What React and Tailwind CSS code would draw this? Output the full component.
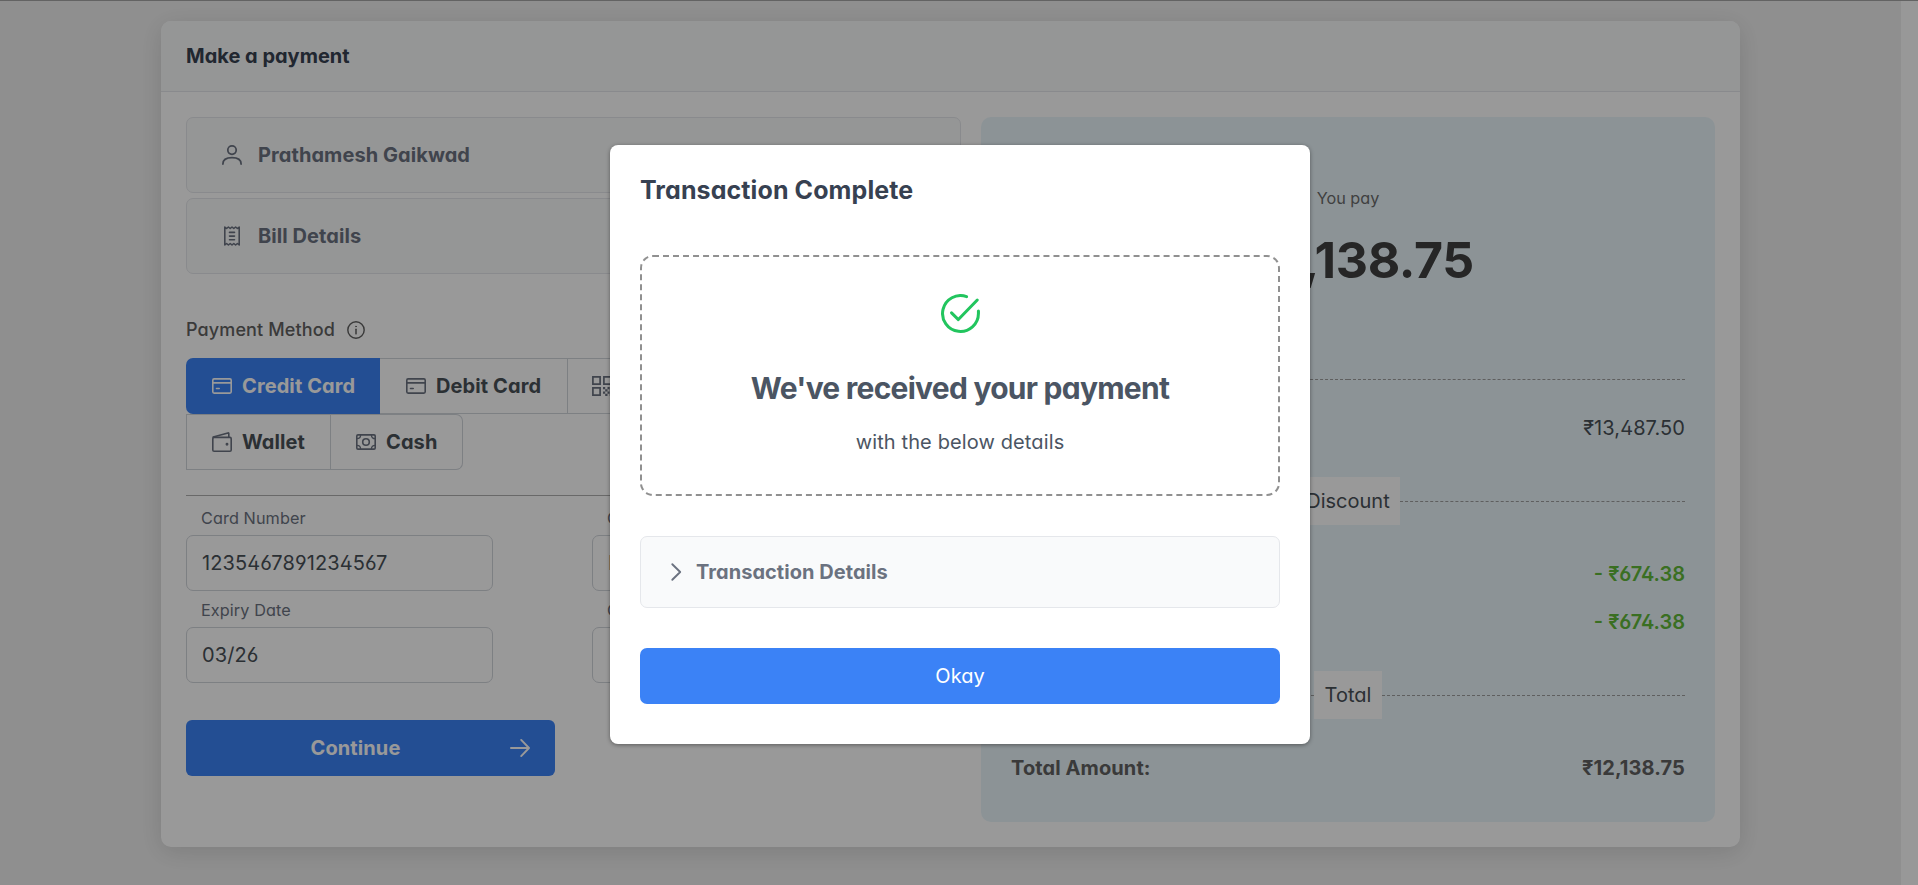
const FONT = "font-['Inter','Liberation_Sans',sans-serif] [font-feature-settings:'cv02','cv03','cv04','cv11']";

function Icon({ children, className = '', size = 20, sw = 1.6 }) {
  return (
    <svg
      width={size}
      height={size}
      viewBox="0 0 20 20"
      fill="none"
      stroke="currentColor"
      strokeWidth={sw}
      strokeLinecap="round"
      strokeLinejoin="round"
      className={'shrink-0 ' + className}
    >
      {children}
    </svg>
  );
}

const UserIcon = (p) => (
  <Icon {...p} sw={1.75}>
    <circle cx="10" cy="5.1" r="4.2" />
    <path d="M.9 19.1c0-4.6 3.5-6.400 9.100-6.400s9.100 1.800 9.100 6.400" />
  </Icon>
);
const ReceiptIcon = (p) => (
  <Icon {...p} sw={1.6}>
    <path d="M2.8 1v18l1.800-1.500 1.800 1.500 1.800-1.500L10 19l1.800-1.500 1.800 1.500 1.800-1.500L17.200 19V1l-1.800 1.500L13.600 1l-1.800 1.500L10 1 8.200 2.500 6.400 1 4.600 2.500z" />
    <path d="M7.500 6.400h5M7.500 10.100h5M7.500 13.800h5" />
  </Icon>
);
const InfoIcon = (p) => (
  <Icon {...p} sw={1.6}>
    <circle cx="10" cy="10" r="9.100" />
    <path d="M10 9.300v5" strokeWidth="1.700" />
    <circle cx="10" cy="6.100" r=".5" fill="currentColor" strokeWidth=".9" />
  </Icon>
);
const CardIcon = (p) => (
  <Icon {...p}>
    <rect x=".8" y="2.850" width="18.400" height="14.300" rx="1.300" />
    <path d="M.9 6.900h18.200M4.500 12.500h2.700" />
  </Icon>
);
const QrIcon = (p) => (
  <Icon {...p} sw={1.7}>
    <path strokeLinejoin="miter" d="M.9.9h7.200v7.200H.9zM11.900.9h7.200v7.200h-7.200zM.9 11.900h7.200v7.200H.9z" />
    <path
      fill="currentColor"
      stroke="none"
      d="M11 11h2.200v2.200H11zM15.500 11h2.200v2.200h-2.200zM13.200 13.200h2.300v2.300h-2.300zM17.700 13.200H20v2.300h-2.300zM11 15.500h2.200v2.200H11zM15.500 15.500h2.200v2.200h-2.200zM13.200 17.700h2.300V20h-2.300zM17.700 17.700H20V20h-2.300z"
    />
  </Icon>
);
const WalletIcon = (p) => (
  <Icon {...p} sw={1.6}>
    <rect x=".8" y="5.400" width="18.400" height="13.800" rx="1.300" />
    <path d="M1.200 5.100 15.900.9c.5-.15.900.1.900.6v3.700" />
    <circle cx="15" cy="12.200" r=".9" fill="currentColor" strokeWidth="1.100" />
  </Icon>
);
const MoneyIcon = (p) => (
  <Icon {...p} sw={1.6}>
    <rect x=".8" y="2.850" width="18.400" height="14.300" rx="1.200" />
    <circle cx="10" cy="10" r="3.300" />
    <path
      d="M.9 6.700c2.200 0 3.700-1.500 3.700-3.700M19.100 6.700c-2.200 0-3.700-1.500-3.700-3.700M.9 13.300c2.200 0 3.700 1.500 3.700 3.700M19.100 13.300c-2.200 0-3.700 1.500-3.700 3.700"
      strokeWidth="1.300"
    />
  </Icon>
);
const ArrowIcon = (p) => (
  <Icon {...p} sw={1.9}>
    <path d="M.95 10h18M11.200 1.900 19 10l-7.800 8.100" />
  </Icon>
);
const ChevronIcon = (p) => (
  <Icon {...p} sw={1.9}>
    <path d="M6.300 2.200 14.200 10l-7.900 7.800" />
  </Icon>
);
const CheckCircleIcon = (p) => (
  <Icon {...p} sw={1.55}>
    <path d="M19.200 8.700V10A9.200 9.200 0 1 1 13.100 1.350" />
    <path d="M5.400 9.700 8.900 13.100 18.600 3.100" />
  </Icon>
);

function Panel({ icon, label, className = '' }) {
  return (
    <div className={'flex h-[76px] items-center gap-4 rounded-[7px] border border-[#e5e7eb] bg-[#f9fafb] pl-[35px] text-[#6b7280] ' + className}>
      {icon}
      <span className="text-[20px] font-bold leading-none tracking-[0.07px]">{label}</span>
    </div>
  );
}

function Tab({ icon, label, className }) {
  return (
    <div className={'flex h-[56px] items-center gap-[10px] border-[#d1d5db] ' + className}>
      {icon}
      {label && <span className="text-[20px] font-bold leading-none tracking-[0.1px]">{label}</span>}
    </div>
  );
}

function Field({ label, value, className = '' }) {
  return (
    <div className={'w-[307px] ' + className}>
      <div className="flex h-[36px] items-center pl-[15px] pt-[3px] text-[16.250px] leading-none tracking-[0.08px] text-[#6b7280]">{label}</div>
      <div className="flex h-[56px] items-center rounded-[7px] border border-[#d1d5db] pl-[15px] text-[20px] leading-none tracking-[0.12px] text-[#495057]">
        {value}
      </div>
    </div>
  );
}

function Divider({ label, width, className }) {
  return (
    <div className={'flex h-[48px] items-center text-[#495057] ' + className}>
      <div className="flex-1 border-t border-dashed border-[#9e9e9e]" />
      {label && <div className={'flex h-[48px] items-center justify-center bg-white text-[20px] leading-none ' + width}>{label}</div>}
      <div className="flex-1 border-t border-dashed border-[#9e9e9e]" />
    </div>
  );
}

export default function App() {
  return (
    <div className={'relative flex h-[885px] w-[1918px] overflow-hidden bg-[#efefef] ' + FONT}>
      <div className="flex-1 border-t border-[#a6a6a6] pl-[161px] pt-[20px]">
        <div className="h-[826px] w-[1579px] rounded-[10px] bg-white shadow-[0_5px_25px_rgba(0,0,0,0.12)]">
          <div className="flex h-[71px] items-center rounded-t-[10px] border-b border-[#e5e7eb] bg-[#f9fafb] px-[25px] text-[20px] font-bold leading-none text-[#374151]">
            Make a payment
          </div>
          <div className="flex gap-[20px] px-[25px] pt-[25px]">
            <div className="w-[775px]">
              <Panel icon={<UserIcon />} label="Prathamesh Gaikwad" />
              <Panel icon={<ReceiptIcon />} label="Bill Details" className="mt-[5px]" />
              <div className="mt-[46px] flex h-[20px] items-center gap-3 text-[18px] font-medium leading-none tracking-[0.12px] text-[#626262]">
                Payment Method
                <InfoIcon size={18} />
              </div>
              <div className="mt-[18px] flex text-[#495057]">
                <Tab icon={<CardIcon />} label="Credit Card" className="w-[194px] rounded-l-[7px] bg-[#3b82f6] pl-[26px] text-white" />
                <Tab icon={<CardIcon className="text-[#6b7280]" />} label="Debit Card" className="w-[187.500px] border-y border-r pl-[26px]" />
                <Tab icon={<QrIcon className="text-[#6b7280]" />} className="w-[130px] border-y border-r pl-[24px]" />
              </div>
              <div className="flex text-[#495057]">
                <Tab icon={<WalletIcon className="text-[#6b7280]" />} label="Wallet" className="w-[145px] border pl-[25px]" />
                <Tab icon={<MoneyIcon className="text-[#6b7280]" />} label="Cash" className="w-[132px] rounded-r-[7px] border-y border-r pl-[25px]" />
              </div>
              <div className="mt-[25px] border-t border-[#b0b0b0]" />
              <div className="mt-[3px] flex gap-[99px]">
                <Field label="Card Number" value="1235467891234567" />
                <Field label="Card Holder" value="Pratham" />
              </div>
              <div className="flex gap-[99px]">
                <Field label="Expiry Date" value="03/26" />
                <Field label="CVV" value="" />
              </div>
              <div className="mt-[37px] flex h-[56px] w-[369px] items-center rounded-[6px] bg-[#3b82f6] pr-[25px] text-white">
                <span className="flex-1 pl-[15px] text-center text-[20px] font-bold leading-none tracking-[0.1px]">Continue</span>
                <ArrowIcon />
              </div>
            </div>
            <div className="h-[705px] w-[734px] rounded-[10px] bg-[#eaf6fb] px-[30px]">
              <div className="pt-[71px] text-center text-[16.250px] leading-[20px] text-[#6b6b6b]">You pay</div>
              <div className="mt-[22px] text-center text-[50px] font-bold leading-[60px] tracking-[-0.35px] text-[#404040]">₹12,138.75</div>
              <Divider className="mt-[65px]" />
              <div className="mt-[13px] text-right text-[20px] leading-[24px] tracking-[0.08px] text-[#495057]">₹13,487.50</div>
              <Divider label="Discount" width="w-[104px]" className="mt-[37px]" />
              <div className="mt-[37px] text-right text-[20px] font-semibold leading-[24px] text-[#62b93a]">- ₹674.38</div>
              <div className="mt-[24px] text-right text-[20px] font-semibold leading-[24px] text-[#62b93a]">- ₹674.38</div>
              <Divider label="Total" width="w-[68px]" className="mt-[37px]" />
              <div className="mt-[37px] flex justify-between text-[20px] font-bold leading-[24px] tracking-[0.1px] text-[#616161]">
                <span>Total Amount:</span>
                <span>₹12,138.75</span>
              </div>
            </div>
          </div>
        </div>
      </div>
      <div className="w-[17px] border-t border-[#a6a6a6] bg-[#fdfdfd]" />

      <div className="absolute inset-0 flex justify-center bg-black/40 pl-[2px] pt-[145px]">
        <div className="h-[599px] w-[700px] rounded-[8px] bg-white px-[30px] pt-[30px] shadow-[0_1px_4px_rgba(0,0,0,0.4)]">
          <div className="text-[25px] font-bold leading-[30px] tracking-[0.1px] text-[#374151]">Transaction Complete</div>
          <div className="mt-[50px] flex h-[241px] flex-col items-center rounded-[13px] border-2 border-dashed border-[#909090] pt-[37px] text-[#4b5563]">
            <CheckCircleIcon size={39} className="text-[#22c55e]" />
            <div className="mt-[37px] text-[30px] font-bold leading-[36px] tracking-tight">We've received your payment</div>
            <div className="mt-[24px] text-[20px] leading-[24px] tracking-[0.12px]">with the below details</div>
          </div>
          <div className="mt-[40px] flex h-[72px] items-center gap-[10px] rounded-[7px] border border-[#e5e7eb] bg-[#f9fafb] pl-[25px] text-[#6b7280]">
            <ChevronIcon />
            <span className="text-[20px] font-bold leading-none tracking-[0.05px]">Transaction Details</span>
          </div>
          <div className="mt-[40px] flex h-[56px] items-center justify-center rounded-[7px] bg-[#3b82f6] text-[20px] leading-none text-white">
            Okay
          </div>
        </div>
      </div>
    </div>
  );
}
